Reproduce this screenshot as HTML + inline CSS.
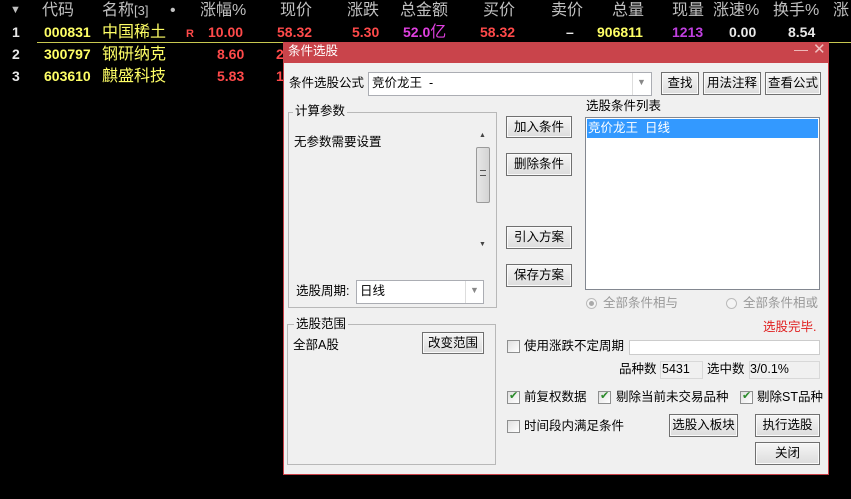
<!DOCTYPE html>
<html><head><meta charset="utf-8"><style>
*{margin:0;padding:0;box-sizing:border-box}
body{width:851px;height:499px;background:#000;position:relative;overflow:hidden;font-family:"Liberation Sans","Noto Sans CJK SC",sans-serif}
.a{position:absolute;white-space:nowrap;line-height:1.2}
.h{color:#c0c0c0;font-size:16px;top:1px}
.r{font-size:14px;font-weight:bold}
.c{font-size:16px;color:#ffff66}
.y{color:#ffff66}.rd{color:#ff4a4a}.m{color:#e040e0}.w{color:#e8e8e8}.p{color:#c040e0}
.d{font-size:12.5px;color:#000}
.btn{position:absolute;background:linear-gradient(#f6f6f6,#dcdcdc);border:1px solid #707070;font-size:12.5px;text-align:center;color:#000;box-shadow:inset 0 0 0 1px #fafafa}
.box{position:absolute;background:#fff;border:1px solid #abadb3}
.grp{position:absolute;border:1px solid #b8b8b8}
.cb{position:absolute;width:13px;height:13px;border:1px solid #8e8f8f;background:linear-gradient(135deg,#e0e0e0,#fff)}
.ck::after{content:"✔";position:absolute;left:1px;top:-3px;font-size:11px;color:#2a8a2a}
</style></head><body>
<div class="a h" style="left:10px;font-size:11px;top:4px">▼</div>
<div class="a h" style="left:42px">代码</div>
<div class="a h" style="left:102px">名称<span style="font-size:13px">[3]</span></div>
<div class="a h" style="left:170px">•</div>
<div class="a h" style="left:200px">涨幅%</div>
<div class="a h" style="left:280px">现价</div>
<div class="a h" style="left:347px">涨跌</div>
<div class="a h" style="left:400px">总金额</div>
<div class="a h" style="left:483px">买价</div>
<div class="a h" style="left:551px">卖价</div>
<div class="a h" style="left:612px">总量</div>
<div class="a h" style="left:672px">现量</div>
<div class="a h" style="left:713px">涨速%</div>
<div class="a h" style="left:773px">换手%</div>
<div class="a h" style="left:833px">涨</div>

<div class="a r w" style="left:12px;top:24px">1</div>
<div class="a r y" style="left:44px;top:24px">000831</div>
<div class="a c" style="left:102px;top:23px">中国稀土</div>
<div class="a rd" style="left:186px;top:28px;font-size:11px;font-weight:bold">R</div>
<div class="a r rd" style="left:208px;top:24px">10.00</div>
<div class="a r rd" style="left:277px;top:24px">58.32</div>
<div class="a r rd" style="left:352px;top:24px">5.30</div>
<div class="a r m" style="left:403px;top:23px">52.0<span style="font-weight:normal;font-size:16px">亿</span></div>
<div class="a r rd" style="left:480px;top:24px">58.32</div>
<div class="a r w" style="left:566px;top:24px">–</div>
<div class="a r y" style="left:597px;top:24px">906811</div>
<div class="a r p" style="left:672px;top:24px">1213</div>
<div class="a r w" style="left:729px;top:24px">0.00</div>
<div class="a r w" style="left:788px;top:24px">8.54</div>
<div class="a" style="left:37px;top:42px;width:814px;height:1px;background:#c8c850"></div>

<div class="a r w" style="left:12px;top:46px">2</div>
<div class="a r y" style="left:44px;top:46px">300797</div>
<div class="a c" style="left:102px;top:45px">钢研纳克</div>
<div class="a r rd" style="left:217px;top:46px">8.60</div>
<div class="a r rd" style="left:276px;top:46px">2</div>
<div class="a r w" style="left:12px;top:68px">3</div>
<div class="a r y" style="left:44px;top:68px">603610</div>
<div class="a c" style="left:102px;top:67px">麒盛科技</div>
<div class="a r rd" style="left:217px;top:68px">5.83</div>
<div class="a r rd" style="left:276px;top:68px">1</div>

<!-- dialog -->
<div class="a" style="left:283px;top:42px;width:546px;height:433px;background:#f0f0f0;border:1px solid #c94148;border-top:none"></div>
<div class="a" style="left:283px;top:42px;width:546px;height:21px;background:#c9444b"></div>
<div class="a" style="left:288px;top:44px;color:#fff;font-size:12.5px">条件选股</div>
<div class="a" style="left:794px;top:41px;color:#f0c0c0;font-size:14px">—</div>
<div class="a" style="left:813px;top:41px;color:#f0c0c0;font-size:15px">✕</div>

<div class="a d" style="left:289px;top:76px">条件选股公式</div>
<div class="box" style="left:368px;top:72px;width:284px;height:24px"></div>
<div class="a d" style="left:372px;top:76px">竞价龙王 &nbsp;-</div>
<div class="a" style="left:632px;top:73px;width:1px;height:22px;background:#ddd"></div>
<div class="a" style="left:637px;top:77px;color:#888;font-size:9px">▼</div>
<div class="btn" style="left:661px;top:72px;width:38px;height:23px;line-height:21px">查找</div>
<div class="btn" style="left:703px;top:72px;width:58px;height:23px;line-height:21px">用法注释</div>
<div class="btn" style="left:765px;top:72px;width:56px;height:23px;line-height:21px">查看公式</div>

<div class="grp" style="left:288px;top:112px;width:209px;height:196px"></div>
<div class="a d" style="left:293px;top:104px;background:#f0f0f0;padding:0 2px">计算参数</div>
<div class="a d" style="left:294px;top:135px">无参数需要设置</div>
<div class="a" style="left:475px;top:128px;width:16px;height:126px;background:#f0f0f0"></div>
<div class="a" style="left:479px;top:132px;color:#444;font-size:7px">▲</div>
<div class="a" style="left:479px;top:241px;color:#444;font-size:7px">▼</div>
<div class="a" style="left:476px;top:147px;width:14px;height:56px;background:linear-gradient(90deg,#e6e6e6,#d4d4d4);border:1px solid #9a9a9a;border-radius:2px"></div>
<div class="a" style="left:480px;top:170px;width:6px;height:6px;border-top:1px solid #555;border-bottom:1px solid #555"></div>
<div class="a d" style="left:296px;top:284px">选股周期:</div>
<div class="box" style="left:356px;top:280px;width:128px;height:24px"></div>
<div class="a d" style="left:360px;top:284px">日线</div>
<div class="a" style="left:465px;top:281px;width:1px;height:22px;background:#ddd"></div>
<div class="a" style="left:470px;top:285px;color:#888;font-size:9px">▼</div>

<div class="btn" style="left:506px;top:116px;width:66px;height:22px;line-height:20px">加入条件</div>
<div class="btn" style="left:506px;top:153px;width:66px;height:23px;line-height:21px">删除条件</div>
<div class="btn" style="left:506px;top:226px;width:66px;height:23px;line-height:21px">引入方案</div>
<div class="btn" style="left:506px;top:264px;width:66px;height:23px;line-height:21px">保存方案</div>

<div class="a d" style="left:586px;top:99px">选股条件列表</div>
<div class="box" style="left:585px;top:117px;width:235px;height:173px;border-color:#828790"></div>
<div class="a" style="left:587px;top:119px;width:231px;height:19px;background:#3399ff"></div>
<div class="a" style="left:588px;top:121px;color:#fff;font-size:12.5px">竞价龙王 &nbsp;日线</div>

<div class="a" style="left:586px;top:298px;width:11px;height:11px;border-radius:50%;border:1px solid #bbb;background:#f4f4f4"></div>
<div class="a" style="left:589px;top:301px;width:5px;height:5px;border-radius:50%;background:#aaa"></div>
<div class="a" style="left:603px;top:296px;color:#999;font-size:12.5px">全部条件相与</div>
<div class="a" style="left:726px;top:298px;width:11px;height:11px;border-radius:50%;border:1px solid #bbb;background:#f4f4f4"></div>
<div class="a" style="left:743px;top:296px;color:#999;font-size:12.5px">全部条件相或</div>
<div class="a" style="left:763px;top:320px;color:#e02020;font-size:12.5px">选股完毕.</div>

<div class="cb" style="left:507px;top:340px"></div>
<div class="a d" style="left:524px;top:339px">使用涨跌不定周期</div>
<div class="box" style="left:629px;top:340px;width:191px;height:15px;border-color:#ccc"></div>
<div class="a d" style="left:619px;top:362px">品种数</div>
<div class="a" style="left:660px;top:361px;width:43px;height:18px;background:#f0f0f0;border:1px solid #d8d8d8"></div>
<div class="a d" style="left:662px;top:362px">5431</div>
<div class="a d" style="left:707px;top:362px">选中数</div>
<div class="a" style="left:749px;top:361px;width:71px;height:18px;background:#f0f0f0;border:1px solid #d8d8d8"></div>
<div class="a d" style="left:750px;top:362px">3/0.1%</div>

<div class="cb ck" style="left:507px;top:391px"></div>
<div class="a d" style="left:524px;top:390px">前复权数据</div>
<div class="cb ck" style="left:598px;top:391px"></div>
<div class="a d" style="left:616px;top:390px">剔除当前未交易品种</div>
<div class="cb ck" style="left:740px;top:391px"></div>
<div class="a d" style="left:757px;top:390px">剔除ST品种</div>

<div class="cb" style="left:507px;top:420px"></div>
<div class="a d" style="left:524px;top:419px">时间段内满足条件</div>
<div class="btn" style="left:669px;top:414px;width:69px;height:23px;line-height:21px">选股入板块</div>
<div class="btn" style="left:755px;top:414px;width:65px;height:23px;line-height:21px">执行选股</div>
<div class="btn" style="left:755px;top:442px;width:65px;height:23px;line-height:21px">关闭</div>

<div class="grp" style="left:287px;top:324px;width:209px;height:141px"></div>
<div class="a d" style="left:294px;top:317px;background:#f0f0f0;padding:0 2px">选股范围</div>
<div class="a d" style="left:293px;top:338px">全部A股</div>
<div class="btn" style="left:422px;top:332px;width:62px;height:22px;line-height:20px">改变范围</div>
</body></html>
